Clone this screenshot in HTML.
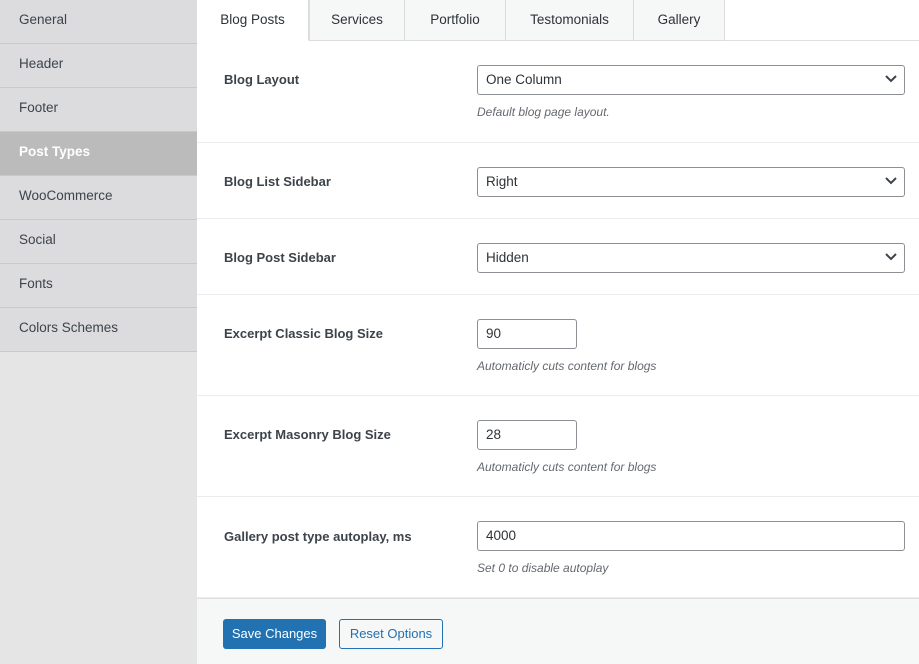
<!DOCTYPE html>
<html><head><style>
*{box-sizing:border-box;margin:0;padding:0}
body{width:919px;height:664px;overflow:hidden;font-family:"Liberation Sans",sans-serif;font-size:13px;color:#3c434a;background:#fff;position:relative}
.side{position:absolute;left:0;top:0;width:197px;height:664px;background:#e5e5e5}
.side div{height:44px;line-height:40px;padding-left:19px;background:#dcdcde;border-bottom:1px solid #c9c9cc;color:#3c434a;font-size:13.5px}
.side div.act{background:#bbbbbb;color:#fff;font-weight:bold}
.tabs{position:absolute;left:197px;top:0;right:0;height:41px;border-bottom:1px solid #e0e0e0;background:#fff}
.tab{position:absolute;top:0;height:41px;line-height:40px;text-align:center;background:#f6f7f7;border-right:1px solid #dcdcde;border-bottom:1px solid #dcdcde;font-size:13.5px;color:#2c3338}
.tab.a{background:#fff;border-bottom-color:#fff}
.row{position:absolute;left:197px;right:0;border-bottom:1px solid #ececec}
.lbl{position:absolute;left:27px;font-weight:bold;color:#3c434a;font-size:13px}
.sel{position:absolute;left:280px;width:428px;height:30px;border:1px solid #8c8f94;border-radius:3px;padding-left:8px;line-height:28px;color:#2c3338;font-size:13.5px;background:#fff}
.sel svg{position:absolute;right:7px;top:9px}
.inp{position:absolute;left:280px;width:100px;height:30px;border:1px solid #8c8f94;border-radius:3px;padding-left:8px;line-height:28px;font-size:13.5px;color:#2c3338}
.inp.w{width:428px}
.d{position:absolute;left:280px;font-style:italic;font-size:12px;color:#646970}
.foot{position:absolute;left:197px;right:0;top:598px;bottom:0;background:#f6f7f7;border-top:1px solid #e0e0e0}
.b1{position:absolute;left:26px;top:20px;width:103px;height:30px;background:#2271b1;border-radius:3px;color:#fff;text-align:center;line-height:30px;font-size:13px}
.b2{position:absolute;left:142px;top:20px;width:104px;height:30px;border:1px solid #2271b1;border-radius:3px;color:#2271b1;background:#f6f7f7;text-align:center;line-height:28px;font-size:13px}
</style></head><body>
<div class="side">
<div>General</div><div>Header</div><div>Footer</div><div class="act">Post Types</div><div>WooCommerce</div><div>Social</div><div>Fonts</div><div>Colors Schemes</div>
</div>
<div class="tabs">
<div class="tab a" style="left:0;width:112px">Blog Posts</div>
<div class="tab" style="left:112px;width:96px;border-left:1px solid #dcdcde">Services</div>
<div class="tab" style="left:208px;width:101px">Portfolio</div>
<div class="tab" style="left:309px;width:128px">Testomonials</div>
<div class="tab" style="left:437px;width:91px">Gallery</div>
</div>
<div class="row" style="top:41px;height:102px"><div class="lbl" style="top:31px">Blog Layout</div><div class="sel" style="top:24px">One Column<svg width="12" height="8"><path d="M1 1l5 5 5-5" stroke="#3c434a" stroke-width="2" fill="none"/></svg></div><div class="d" style="top:64px">Default blog page layout.</div></div>
<div class="row" style="top:143px;height:76px"><div class="lbl" style="top:31px">Blog List Sidebar</div><div class="sel" style="top:24px">Right<svg width="12" height="8"><path d="M1 1l5 5 5-5" stroke="#3c434a" stroke-width="2" fill="none"/></svg></div></div>
<div class="row" style="top:219px;height:76px"><div class="lbl" style="top:31px">Blog Post Sidebar</div><div class="sel" style="top:24px">Hidden<svg width="12" height="8"><path d="M1 1l5 5 5-5" stroke="#3c434a" stroke-width="2" fill="none"/></svg></div></div>
<div class="row" style="top:295px;height:101px"><div class="lbl" style="top:31px">Excerpt Classic Blog Size</div><div class="inp" style="top:24px">90</div><div class="d" style="top:64px">Automaticly cuts content for blogs</div></div>
<div class="row" style="top:396px;height:101px"><div class="lbl" style="top:31px">Excerpt Masonry Blog Size</div><div class="inp" style="top:24px">28</div><div class="d" style="top:64px">Automaticly cuts content for blogs</div></div>
<div class="row" style="top:497px;height:101px"><div class="lbl" style="top:32px">Gallery post type autoplay, ms</div><div class="inp w" style="top:24px">4000</div><div class="d" style="top:64px">Set 0 to disable autoplay</div></div>
<div class="foot"><div class="b1">Save Changes</div><div class="b2">Reset Options</div></div>
</body></html>
